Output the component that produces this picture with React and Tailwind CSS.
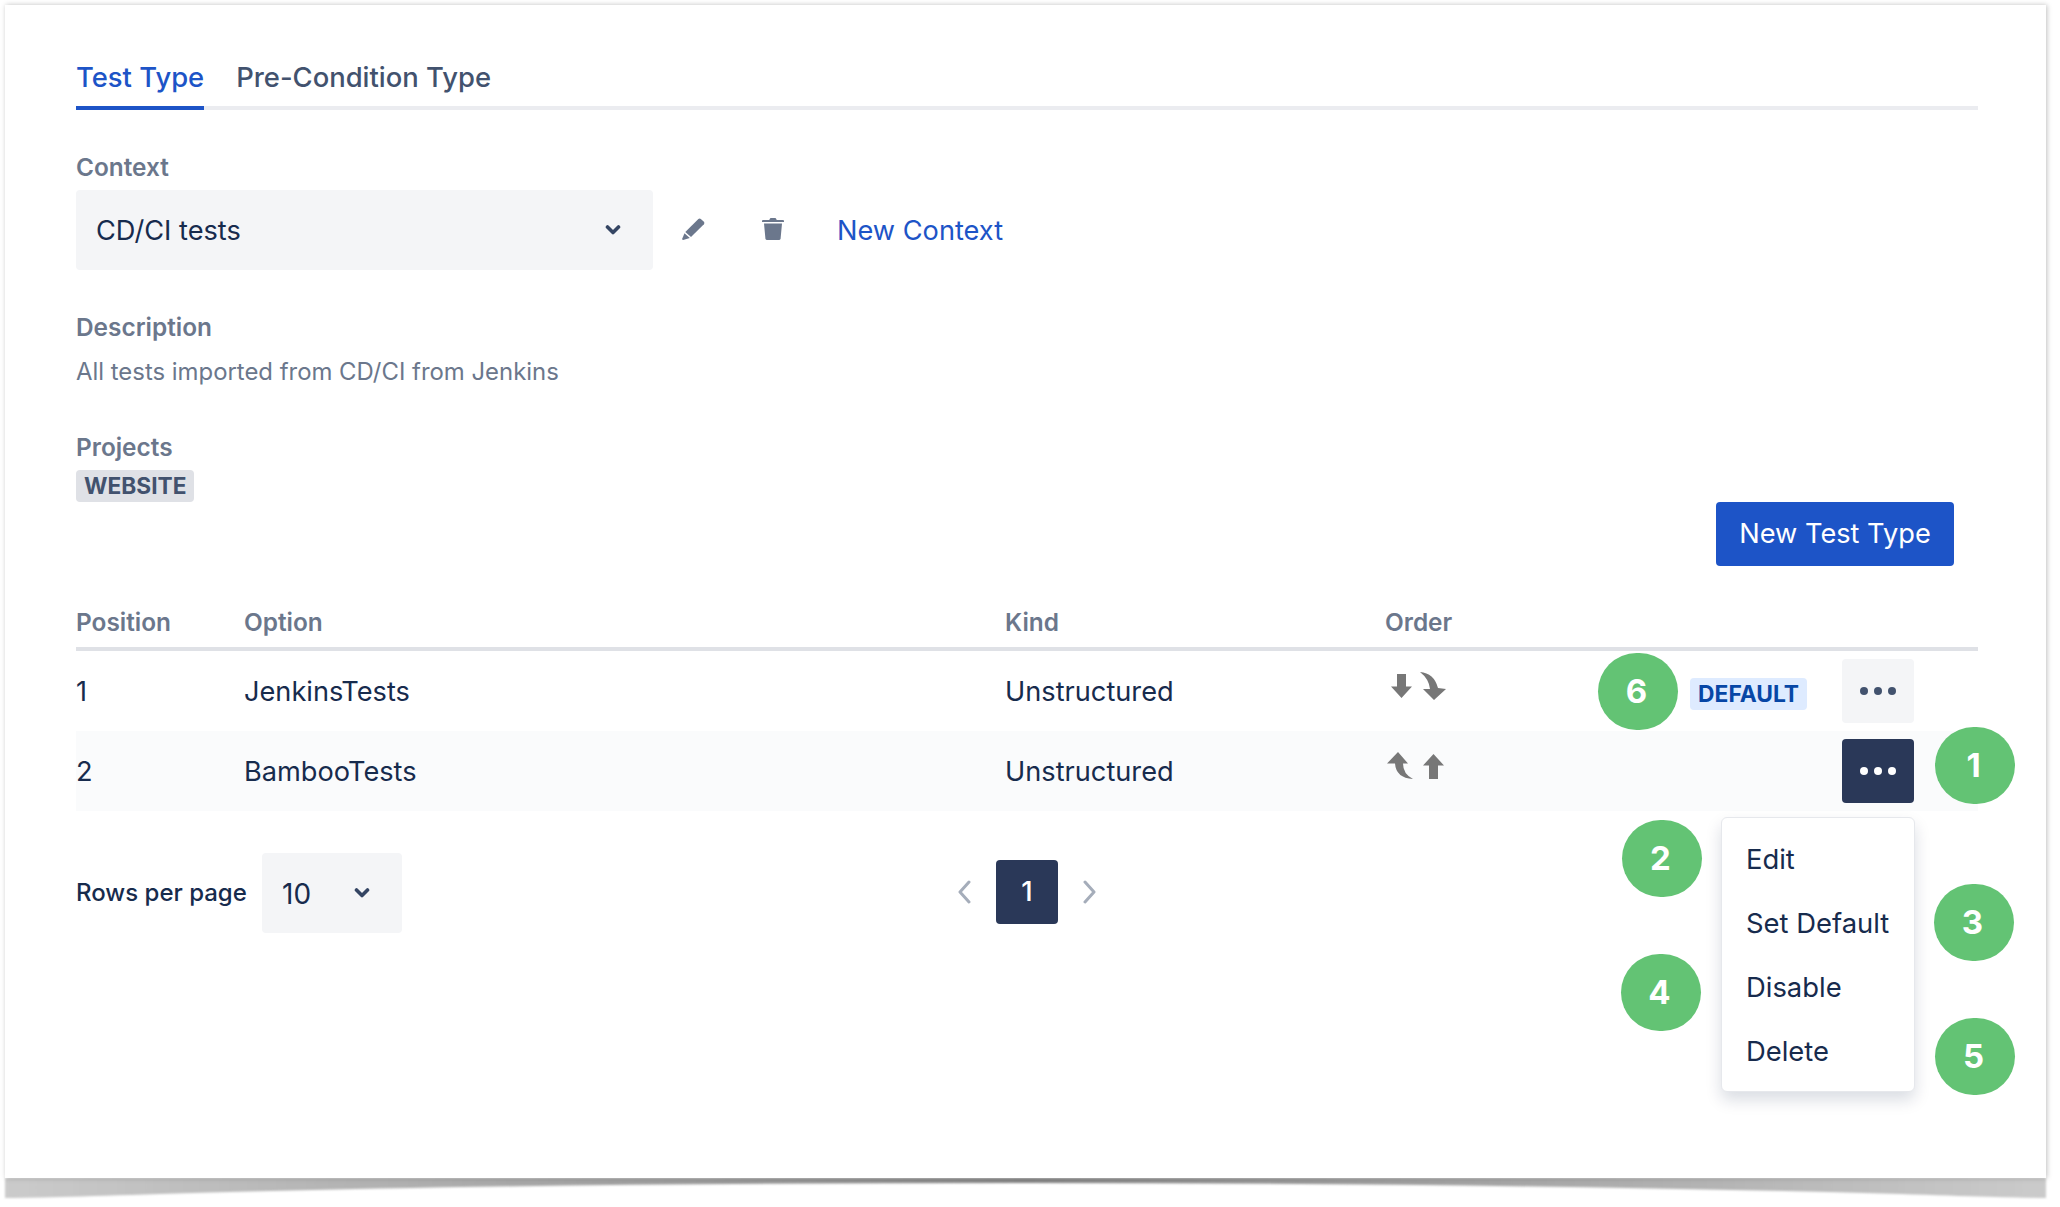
const FONT = "font-['Inter',sans-serif]";

function Chevron({ className }) {
  return (
    <svg viewBox="0 0 16 10" className={className} fill="none" stroke="#344563" strokeWidth="3.6" strokeLinecap="round" strokeLinejoin="round">
      <path d="M2.5 2 L8 7.5 L13.5 2" />
    </svg>
  );
}

function PageChevron({ left }) {
  return (
    <svg viewBox="0 0 14 24" className="w-[14px] h-[24px]" fill="none" stroke="#a5adba" strokeWidth="3" strokeLinecap="round" strokeLinejoin="round">
      <path d={left ? "M12 2 L3 12 L12 22" : "M2 2 L11 12 L2 22"} />
    </svg>
  );
}

function Pencil() {
  return (
    <svg viewBox="0 0 23 22" className="w-[23px] h-[22px]" fill="#6b778c">
      <path d="M16.4 1.1 Q17.6 0 18.8 1 L21.9 3.8 Q23 5 21.9 6.2 L9 19 L3.3 13.9 Z" />
      <path d="M2.5 15.2 L7.8 20 L1.2 22 Q0 22 0.2 20.8 Z" />
    </svg>
  );
}

function Trash() {
  return (
    <svg viewBox="0 0 22 22" className="w-[22px] h-[22px]" fill="#6b778c">
      <path d="M7.6 1.2 Q8 0 9 0 H13 Q14 0 14.4 1.2 L14.7 2 H21 Q22 2 22 3 V4 H0 V3 Q0 2 1 2 H7.3 Z" />
      <path d="M2 5.6 H20 L18.6 20.4 Q18.4 22 16.8 22 H5.2 Q3.6 22 3.4 20.4 Z" />
    </svg>
  );
}

// order arrows
function ArrowDown() {
  return (
    <svg viewBox="0 0 21 24" className="w-[21px] h-[24px] blur-[0.4px]" fill="#777777">
      <path d="M6 0 H15 V12.5 H21 L10.5 24 L0 12.5 H6 Z" />
    </svg>
  );
}

function ArrowUp() {
  return (
    <svg viewBox="0 0 21 25" className="w-[21px] h-[25px] blur-[0.4px]" fill="#777777">
      <path d="M10.5 0 L21 11.5 H15 V25 H6 V11.5 H0 Z" />
    </svg>
  );
}

function CurveDown() {
  return (
    <svg viewBox="0 0 26 28" className="w-[26px] h-[28px] blur-[0.4px]" fill="#777777">
      <path d="M0 0 Q14 1 18 16 L26 17 L14 28 L3 17 L10 17 Q9 7 0 0 Z" />
    </svg>
  );
}

function CurveUp() {
  return (
    <svg viewBox="0 0 26 28" className="w-[26px] h-[28px] blur-[0.4px]" fill="#777777">
      <path d="M11 0 L21 11.5 H16 Q16 22 26 27 Q9 26 8 11.5 H0 Z" />
    </svg>
  );
}

function Dots({ dark }) {
  const dot = dark ? "bg-white" : "bg-[#42526e]";
  return (
    <button
      className={
        "w-[72px] h-[64px] rounded-[4px] flex items-center justify-center gap-[6px] " +
        (dark ? "bg-[#2a3858]" : "bg-[#f4f5f7]")
      }
    >
      <span className={"w-[8px] h-[8px] rounded-full " + dot} />
      <span className={"w-[8px] h-[8px] rounded-full " + dot} />
      <span className={"w-[8px] h-[8px] rounded-full " + dot} />
    </button>
  );
}

function Marker({ n, className }) {
  return (
    <div
      className={
        "absolute w-[80px] h-[77px] pr-[3px] rounded-full bg-[#63c374] text-white text-[33px] font-bold flex items-center justify-center " +
        className
      }
    >
      {n}
    </div>
  );
}

function Label({ children, className = "" }) {
  return (
    <div className={"h-[32px] leading-[32px] text-[24.4px] font-semibold text-[#6b778c] " + className}>
      {children}
    </div>
  );
}

function Row({ pos, option, striped, children, arrows, dark }) {
  return (
    <div className={"flex items-center h-[80px] text-[27.2px] text-[#172b4d] " + (striped ? "bg-[#fafbfc]" : "")}>
      <div className="w-[168px] pt-[3px]">{pos}</div>
      <div className="w-[761px] pt-[3px]">{option}</div>
      <div className="w-[380px] pt-[3px]">Unstructured</div>
      <div className="flex-1 flex items-center mb-[10px]">{arrows}</div>
      {children}
      <div className="mr-[64px]">
        <Dots dark={dark} />
      </div>
    </div>
  );
}

export default function App() {
  return (
    <div className={"relative w-[2060px] h-[1207px] overflow-hidden bg-white " + FONT}>
      {/* wedge shadow under the card */}
      <svg className="absolute left-0 top-[1170px] w-[2060px] h-[37px]" viewBox="0 0 2060 37">
        <defs>
          <linearGradient id="wedge" x1="0" x2="1" y1="0" y2="0">
            <stop offset="0" stopColor="#cbcbcb" />
            <stop offset="0.5" stopColor="#858585" />
            <stop offset="1" stopColor="#cbcbcb" />
          </linearGradient>
          <filter id="soft" x="-2%" y="-30%" width="104%" height="160%">
            <feGaussianBlur stdDeviation="1.2" />
          </filter>
        </defs>
        <path
          d="M5 8 H2046 V28 Q2020 28 1900 24 Q1500 13 1026 13 Q520 13 160 24 Q40 28 5 28 Z"
          fill="url(#wedge)"
          filter="url(#soft)"
        />
      </svg>

      {/* card */}
      <div className="absolute left-[5px] top-[5px] w-[2041px] h-[1173px] bg-white shadow-[1px_0_5px_rgba(0,0,0,0.25)] pt-[52px] pl-[71px] pr-[68px]">
        <div className="flex gap-[32px] border-b-4 border-[#ebecf0] h-[53px]">
          <div className="h-[53px] leading-[41px] text-[27.4px] font-medium text-[#1d54c7] border-b-4 border-[#1d54c7]">Test Type</div>
          <div className="h-[53px] leading-[41px] text-[27.4px] font-medium text-[#42526e]">Pre-Condition Type</div>
        </div>

        <Label className="mt-[41px]">Context</Label>
        <div className="mt-[7px] flex items-center">
          <div className="w-[577px] h-[80px] rounded-[4px] bg-[#f4f5f7] pl-[20px] pr-[32px] flex items-center justify-between text-[27.2px] text-[#172b4d]">
            <span className="pt-[2px]">CD/CI tests</span>
            <Chevron className="w-[16px] h-[10px]" />
          </div>
          <div className="ml-[29px] mb-[2px]">
            <Pencil />
          </div>
          <div className="ml-[57px] mb-[2px]">
            <Trash />
          </div>
          <a className="ml-[53px] pt-[2px] text-[27.2px] text-[#1d54c7]">New Context</a>
        </div>

        <Label className="mt-[41px]">Description</Label>
        <div className="mt-[11px] h-[36px] leading-[36px] text-[23.9px] text-[#6b778c]">All tests imported from CD/CI from Jenkins</div>

        <Label className="mt-[41px]">Projects</Label>
        <div className="mt-[7px] flex h-[32px]">
          <span className="h-[32px] leading-[32px] px-[8px] rounded-[4px] bg-[#dfe1e6] text-[22.7px] font-bold text-[#42526e]">WEBSITE</span>
        </div>
        <div className="flex justify-end">
          <button className="w-[238px] h-[64px] pt-[1px] mr-[24px] rounded-[4px] bg-[#1d54c7] text-white text-[27.2px]">New Test Type</button>
        </div>

        <div className="mt-[40px] flex h-[41px] text-[24.4px] font-semibold text-[#6b778c] leading-[32px]">
          <div className="w-[168px]">Position</div>
          <div className="w-[761px]">Option</div>
          <div className="w-[380px]">Kind</div>
          <div>Order</div>
        </div>
        <div className="h-[4px] bg-[#dfe1e6]" />

        <Row
          pos="1"
          option="JenkinsTests"
          arrows={
            <div className="flex items-center gap-[8px] ml-[6px]">
              <ArrowDown />
              <CurveDown />
            </div>
          }
        >
          <span className="h-[32px] leading-[32px] px-[8px] mt-[6px] mr-[35px] rounded-[4px] bg-[#deebff] text-[22.8px] font-bold text-[#0747a6]">DEFAULT</span>
        </Row>
        <Row
          pos="2"
          option="BambooTests"
          striped
          dark
          arrows={
            <div className="flex items-center gap-[10px] ml-[2px]">
              <CurveUp />
              <ArrowUp />
            </div>
          }
        />

        <div className="mt-[42px] flex items-center">
          <span className="text-[24px] font-medium text-[#172b4d] w-[186px]">Rows per page</span>
          <div className="w-[140px] h-[80px] rounded-[4px] bg-[#f4f5f7] pl-[20px] pr-[32px] flex items-center justify-between text-[28px] text-[#172b4d]">
            <span className="pt-[2px]">10</span>
            <Chevron className="w-[16px] h-[10px]" />
          </div>
          <div className="ml-[555px] mb-[3px] flex items-center">
            <PageChevron left />
            <div className="ml-[25px] mr-[25px] w-[62px] h-[64px] rounded-[4px] bg-[#2a3858] text-white text-[27.4px] font-medium flex items-center justify-center">1</div>
            <PageChevron />
          </div>
        </div>
      </div>

      {/* dropdown menu */}
      <div className="absolute left-[1721px] top-[817px] w-[194px] h-[275px] py-[9px] bg-white rounded-[6px] border border-[#e6e8ec] shadow-[0_8px_16px_rgba(9,30,66,0.15)] text-[27.4px] text-[#172b4d]">
        <div className="h-[64px] leading-[64px] pl-[24px]">Edit</div>
        <div className="h-[64px] leading-[64px] pl-[24px] whitespace-nowrap">Set Default</div>
        <div className="h-[64px] leading-[64px] pl-[24px]">Disable</div>
        <div className="h-[64px] leading-[64px] pl-[24px]">Delete</div>
      </div>

      {/* callouts */}
      <Marker n="1" className="left-[1935px] top-[727px]" />
      <Marker n="2" className="left-[1622px] top-[820px]" />
      <Marker n="3" className="left-[1934px] top-[884px]" />
      <Marker n="4" className="left-[1621px] top-[954px]" />
      <Marker n="5" className="left-[1935px] top-[1018px]" />
      <Marker n="6" className="left-[1598px] top-[653px]" />
    </div>
  );
}
